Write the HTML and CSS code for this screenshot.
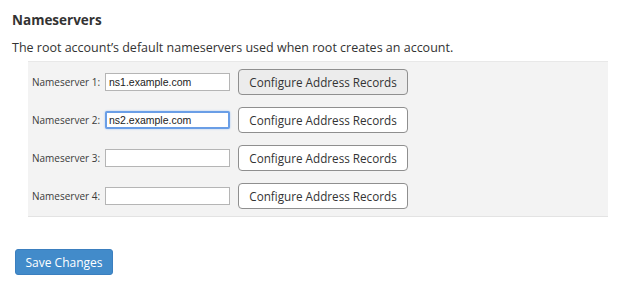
FILE: index.html
```html
<!DOCTYPE html>
<html>
<head>
<meta charset="utf-8">
<link rel="stylesheet" href="styles.css">
</head>
<body>
<div class="page">
  <h3 class="title">Nameservers</h3>
  <p class="desc">The root account’s default nameservers used when root creates an account.</p>
  <div class="panel">
    <div class="row">
      <label class="lbl">Nameserver 1:</label>
      <input class="field" type="text" value="ns1.example.com">
      <button class="cfg hover">Configure Address Records</button>
    </div>
    <div class="row">
      <label class="lbl">Nameserver 2:</label>
      <input class="field focus" type="text" value="ns2.example.com">
      <button class="cfg">Configure Address Records</button>
    </div>
    <div class="row">
      <label class="lbl">Nameserver 3:</label>
      <input class="field" type="text" value="">
      <button class="cfg">Configure Address Records</button>
    </div>
    <div class="row">
      <label class="lbl">Nameserver 4:</label>
      <input class="field" type="text" value="">
      <button class="cfg">Configure Address Records</button>
    </div>
  </div>
  <button class="save">Save Changes</button>
</div>
</body>
</html>
```
FILE: styles.css
```css
html, body { margin: 0; padding: 0; background: #fff; }
body { font-family: "Open Sans", "Liberation Sans", sans-serif; color: #333; }
.page { padding: 10px 12px 0 12px; }
.title { margin: 0; font-size: 13.5px; line-height: 20px; font-weight: 700; color: #333; }
.desc { margin: 9px 0 0 0; font-size: 12.5px; line-height: 18px; }
.panel {
  margin: 4px 4px 0 16px;
  background: #f3f3f3;
  border-top: 1px solid #e8e8e8;
  border-bottom: 1px solid #e3e3e3;
  padding: 7px 0 7px 4px;
  display: flex; flex-direction: column; gap: 12px;
}
.row { display: flex; align-items: center; height: 26px; }
.lbl { font-size: 10px; width: 73px; flex-shrink: 0; white-space: nowrap; color: #3a3a3a; }
.field {
  box-sizing: border-box; width: 125px; height: 18px; margin: 0; flex-shrink: 0;
  border: 1px solid #b5b5b5; background: #fff; padding: 0 3px;
  font-family: "Liberation Sans", Arial, sans-serif; font-size: 10.5px; color: #222;
  border-radius: 0; outline: none;
}
.field.focus { border: 2px solid #6a9ee6; padding: 0 2px; border-radius: 2px; box-shadow: 0 0 2px #9cc2f2; }
.cfg {
  box-sizing: border-box; margin-left: 8px; width: 170px; height: 26px; flex-shrink: 0;
  border: 1px solid #8f8f8f; border-radius: 4px; background: #fff;
  font-family: "Open Sans", "Liberation Sans", sans-serif; font-size: 11.7px; color: #333; padding: 0;
}
.cfg.hover { background: #ececec; }
.save {
  display: block; margin: 32px 0 0 3px; box-sizing: border-box; width: 98px; height: 26px;
  background: #428bca; color: #fff; border: 1px solid #3b7fbf; border-radius: 3px;
  font-family: "Open Sans", "Liberation Sans", sans-serif; font-size: 12px; padding: 0;
}
```
